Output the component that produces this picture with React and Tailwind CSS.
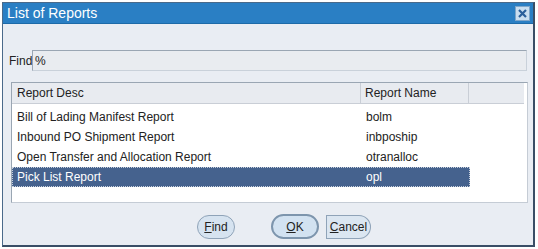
export default function App() {
  const rows = [
    ["Bill of Lading Manifest Report", "bolm"],
    ["Inbound PO Shipment Report", "inbpoship"],
    ["Open Transfer and Allocation Report", "otranalloc"],
    ["Pick List Report", "opl"],
  ];
  return (
    <div className="w-[538px] h-[249px] bg-white relative" style={{ fontFamily: '"Liberation Sans", Arial, sans-serif' }}>
      <div className="absolute left-[2px] top-[2px] w-[533px] h-[245px] border border-[#4a6a8a] border-r-2 border-b-2 border-r-[#3a4e66] border-b-[#3a4e66] bg-[#e9edf3] flex flex-col">
        <div className="h-[21px] bg-[#2a7fc4] flex items-center justify-between pl-[4px] pr-[3px] border-b border-[#1d6aa8]">
          <span className="text-white text-[14px] leading-none">List of Reports</span>
          <div className="w-[15px] h-[15px] bg-[#c9def0] border border-[#7fa6c9] flex items-center justify-center">
            <svg width="9" height="9" viewBox="0 0 9 9"><path d="M1 1L8 8M8 1L1 8" stroke="#2a5f9a" strokeWidth="2.2" /></svg>
          </div>
        </div>
        <div className="flex items-center mt-[26px] pl-[6px]">
          <span className="text-[12px] text-[#222] w-[23px]">Find</span>
          <div className="w-[495px] h-[21px] border border-[#9aa6b3] border-b-[#c9d1da] border-r-[#c9d1da] bg-[#e9ecf0] flex items-center pl-[2px] text-[12px] text-[#222]">%</div>
        </div>
        <div className="ml-[8px] mt-[11px] w-[517px] h-[121px] border border-[#9aa6b3] border-r-[#c5ccd5] border-b-[#c5ccd5] bg-white flex flex-col">
          <div className="h-[21px] flex bg-[#e8ebf0] border-b border-[#c9ced6] text-[12px] text-[#222] mr-[3px]">
            <div className="w-[349px] pl-[5px] flex items-center border-r border-[#c9ced6]">Report Desc</div>
            <div className="w-[108px] pl-[4px] flex items-center border-r border-[#c9ced6]">Report Name</div>
            <div className="flex-1" />
          </div>
          <div className="flex flex-col pt-[3px]">
            {rows.map(([d, n], i) => {
              const sel = i === 3;
              return (
                <div key={d} className={"h-[20px] w-[458px] flex items-center text-[12px] " + (sel ? "bg-[#45628e] text-white outline outline-1 outline-dotted outline-[#c8d0dc] -outline-offset-1" : "text-[#222]")}>
                  <div className="w-[349px] pl-[5px]">{d}</div>
                  <div className="pl-[5px]">{n}</div>
                </div>
              );
            })}
          </div>
        </div>
        <div className="flex items-center mt-[11px] pl-[194px] text-[12px] text-[#222]">
          <div className="w-[38px] h-[24px] rounded-full border border-[#8fa3b8] bg-[#d6e3f0] flex items-center justify-center"><span><u>F</u>ind</span></div>
          <div className="w-[48px] h-[25px] ml-[36px] rounded-full border-2 border-[#7d95ad] bg-[#d2e2f1] flex items-center justify-center"><span><u>O</u>K</span></div>
          <div className="w-[45px] h-[24px] ml-[7px] rounded-r-full rounded-l-[6px] border border-[#8fa3b8] bg-[#dbe6f1] flex items-center justify-center"><span><u>C</u>ancel</span></div>
        </div>
      </div>
    </div>
  );
}
